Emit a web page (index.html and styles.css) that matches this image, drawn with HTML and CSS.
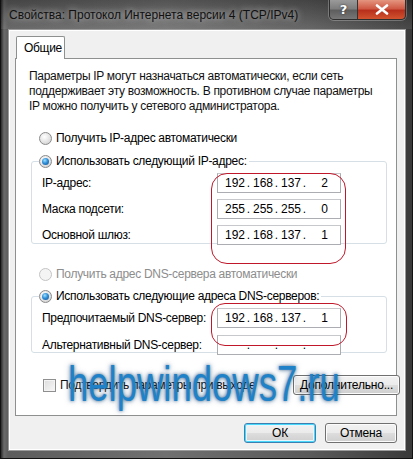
FILE: index.html
```html
<!DOCTYPE html>
<html lang="ru">
<head>
<meta charset="utf-8">
<link rel="stylesheet" href="styles.css">
</head>
<body>
<div class="window">
  <div class="titlebar">
    <div class="title">Свойства: Протокол Интернета версии 4 (TCP/IPv4)</div>
    <div class="capbtns">
      <div class="cap help">?</div>
      <div class="cap close">
        <svg width="14" height="11" viewBox="0 0 14 11"><path d="M2 1.5 L12 9.5 M12 1.5 L2 9.5" stroke="#fff" stroke-width="2.6" stroke-linecap="round"/></svg>
      </div>
    </div>
  </div>
  <div class="client">
    <div class="tabs"><div class="tab">Общие</div></div>
    <div class="panel">
      <p class="intro">Параметры IP могут назначаться автоматически, если сеть<br>поддерживает эту возможность. В противном случае параметры<br>IP можно получить у сетевого администратора.</p>
      <div class="radio-row"><span class="radio"></span>Получить IP-адрес автоматически</div>
      <fieldset class="group">
        <legend><span class="radio on"></span>Использовать следующий IP-адрес:</legend>
        <div class="row"><span class="lbl">IP-адрес:</span><div class="ip"><span class="seg">192</span><span class="dot">.</span><span class="seg">168</span><span class="dot">.</span><span class="seg">137</span><span class="dot">.</span><span class="seg">2</span></div></div>
        <div class="row"><span class="lbl">Маска подсети:</span><div class="ip"><span class="seg">255</span><span class="dot">.</span><span class="seg">255</span><span class="dot">.</span><span class="seg">255</span><span class="dot">.</span><span class="seg">0</span></div></div>
        <div class="row"><span class="lbl">Основной шлюз:</span><div class="ip"><span class="seg">192</span><span class="dot">.</span><span class="seg">168</span><span class="dot">.</span><span class="seg">137</span><span class="dot">.</span><span class="seg">1</span></div></div>
        <div class="mark mark1"></div>
      </fieldset>
      <div class="radio-row disabled"><span class="radio"></span>Получить адрес DNS-сервера автоматически</div>
      <fieldset class="group group2">
        <legend><span class="radio on"></span>Использовать следующие адреса DNS-серверов:</legend>
        <div class="row"><span class="lbl">Предпочитаемый DNS-сервер:</span><div class="ip"><span class="seg">192</span><span class="dot">.</span><span class="seg">168</span><span class="dot">.</span><span class="seg">137</span><span class="dot">.</span><span class="seg">1</span></div></div>
        <div class="row"><span class="lbl">Альтернативный DNS-сервер:</span><div class="ip"><span class="seg"></span><span class="dot">.</span><span class="seg"></span><span class="dot">.</span><span class="seg"></span><span class="dot">.</span><span class="seg"></span></div></div>
        <div class="mark mark2"></div>
      </fieldset>
      <div class="bottom-row">
        <label class="check-row"><span class="checkbox"></span>Подтвердить параметры при выходе</label>
        <button class="btn adv">Дополнительно...</button>
      </div>
      <div class="watermark">helpwindows7.ru</div>
    </div>
    <div class="buttons">
      <button class="btn ok">ОК</button>
      <button class="btn">Отмена</button>
    </div>
  </div>
</div>
</body>
</html>
```
FILE: styles.css
```css
* { box-sizing: border-box; }
html, body { margin: 0; padding: 0; }
body {
  width: 413px;
  height: 459px;
  overflow: hidden;
  background: #1e1e1e;
  font-family: "Liberation Sans", Arial, sans-serif;
  font-size: 12px;
  letter-spacing: -0.3px;
  color: #000;
}
.window {
  width: 413px;
  height: 459px;
  display: flex;
  flex-direction: column;
  padding: 0 6px 7px 7px;
  background: linear-gradient(90deg, #2a2a2a 0px, #6a6a6a 3px, #5c5c5c 7px, #707070 40%, #5a5a5a 75%, #3a3a3a 100%);
  border-left: 1px solid #111;
  border-right: 1px solid #111;
  border-bottom: 1px solid #111;
  position: relative;
}
.window::before {
  content: "";
  position: absolute;
  left: 0; right: 0; top: 0; height: 29px;
  background: linear-gradient(180deg, rgba(0,0,0,0.25), rgba(255,255,255,0.08));
  pointer-events: none;
}
.titlebar {
  height: 29px;
  display: flex;
  align-items: flex-start;
  position: relative;
}
.title {
  padding: 8px 0 0 1px;
  font-size: 12px;
  letter-spacing: 0;
  color: #111;
  text-shadow: 0 0 6px rgba(255,255,255,0.55), 0 0 10px rgba(255,255,255,0.35);
  white-space: nowrap;
}
.capbtns {
  margin-left: auto;
  margin-right: 0;
  display: flex;
  border: 1px solid #2e2e2e;
  border-top: none;
  border-radius: 0 0 5px 5px;
  overflow: hidden;
  box-shadow: 0 0 0 1px rgba(255,255,255,0.25);
}
.cap {
  height: 19px;
  display: flex;
  align-items: center;
  justify-content: center;
  color: #fff;
  font-weight: bold;
  font-family: "DejaVu Sans", sans-serif;
  font-size: 13px;
  letter-spacing: 0;
}
.help {
  width: 28px;
  background: linear-gradient(180deg, #9a9a9a 0%, #7e7e7e 45%, #5e5e5e 55%, #777 100%);
  border-right: 1px solid #333;
  text-shadow: 0 0 2px #222;
}
.close {
  width: 47px;
  background: linear-gradient(180deg, #e4957f 0%, #cf5a45 45%, #b8301c 55%, #d2532f 100%);
}
.client {
  flex: 1;
  background: #f0f0f0;
  border: 1px solid #9a9a9a;
  box-shadow: inset 0 0 0 1px #fff;
  padding: 6px 8px 0 6px;
  display: flex;
  flex-direction: column;
}
.tabs { display: flex; height: 22px; position: relative; z-index: 1; }
.tab {
  margin-left: 1px;
  width: 49px;
  height: 23px;
  border: 1px solid #8e8f8f;
  border-bottom: none;
  border-radius: 2px 2px 0 0;
  background: #fff;
  padding: 4px 0 0 7px;
}
.panel {
  height: 358px;
  background: #fff;
  border: 1px solid #8e8f8f;
  padding: 10px 0 0 13px;
  position: relative;
}
.intro {
  margin: 0;
  width: 365px;
  line-height: 15px;
  color: #111;
  white-space: nowrap;
}
.radio-row {
  display: flex;
  align-items: center;
  height: 16px;
  margin: 16px 0 0 10px;
}
.radio {
  width: 13px;
  height: 13px;
  border-radius: 50%;
  border: 1px solid #8a8a8a;
  background: radial-gradient(circle at 40% 35%, #fff 0%, #e8e8e8 45%, #c8c8c8 100%);
  margin-right: 4px;
  flex: none;
  position: relative;
}
.radio.on::after {
  content: "";
  position: absolute;
  left: 2px; top: 2px;
  width: 7px; height: 7px;
  border-radius: 50%;
  background: radial-gradient(circle at 40% 35%, #9fe0ff 0%, #2f8fd8 45%, #0e4d8c 100%);
}
.disabled { color: #8d8d8d; margin-top: 22px; }
.disabled .radio { border-color: #c4c4c4; background: #f4f4f4; }
.group {
  margin: 7px 0 0 2px;
  width: 356px;
  height: 91px;
  border: 1px solid #d5dfe5;
  border-radius: 3px;
  padding: 4px 0 0 10px;
  position: relative;
}
.group legend {
  padding: 0 2px 0 0;
  margin-left: -3px;
  display: flex;
  align-items: center;
  height: 16px;
}
.row {
  display: flex;
  align-items: center;
  height: 20px;
  margin-bottom: 6px;
}
.lbl { width: 175px; }
.ip {
  width: 124px;
  height: 20px;
  border: 1px solid #abadb3;
  border-top-color: #c6c8cc;
  background: #fff;
  display: flex;
  align-items: center;
  padding-left: 6px;
  font-size: 12px;
  letter-spacing: 0;
}
.seg { width: 21px; text-align: right; }
.dot { width: 7px; text-align: center; }
.ip .seg:last-child { width: 20px; }
.group2 { height: 65px; margin-top: 6px; padding-top: 4px; }
.group2 .row { margin-bottom: 7px; }
.mark {
  position: absolute;
  border: 1px solid #c0182a;
  border-radius: 16px;
  pointer-events: none;
}
.mark1 { left: 179px; top: 4px; width: 135px; height: 91px; }
.mark2 { left: 179px; top: -1px; width: 136px; height: 43px; border-radius: 14px; }
.bottom-row {
  display: flex;
  align-items: center;
  margin: 22px 0 0 14px;
  width: 357px;
}
.check-row { display: flex; align-items: center; color: #111; }
.checkbox {
  width: 13px; height: 13px;
  border: 1px solid #8f8f8f;
  background: linear-gradient(135deg, #dcdcdc, #f8f8f8);
  box-shadow: inset 0 0 0 1px #f4f4f4;
  margin-right: 4px;
}
.btn {
  font-family: "Liberation Sans", Arial, sans-serif;
  font-size: 12px;
  letter-spacing: -0.2px;
  height: 20px;
  width: 72px;
  padding: 0;
  border: 1px solid #707070;
  border-radius: 3px;
  background: linear-gradient(180deg, #f2f2f2 0%, #ebebeb 48%, #dddddd 52%, #cfcfcf 100%);
  box-shadow: inset 0 0 0 1px #fcfcfc;
  color: #000;
}
.adv { width: 107px; margin-left: auto; }
.ok {
  border-color: #3c7fb1;
  box-shadow: inset 0 0 0 1px #48d8fb, inset 0 0 0 2px #e6f6fc;
}
.buttons {
  display: flex;
  justify-content: flex-end;
  gap: 9px;
  padding-top: 7px;
}
.watermark {
  position: absolute;
  left: 52px;
  top: 300px;
  font-family: "Liberation Sans", Arial, sans-serif;
  font-size: 50px;
  line-height: 50px;
  letter-spacing: 0;
  color: #1f82c8;
  transform: scaleX(0.73);
  transform-origin: 0 0;
  text-shadow: 0 0 4px rgba(10,60,110,0.7), 0 0 8px rgba(10,60,110,0.35);
  pointer-events: none;
  white-space: nowrap;
}
```
